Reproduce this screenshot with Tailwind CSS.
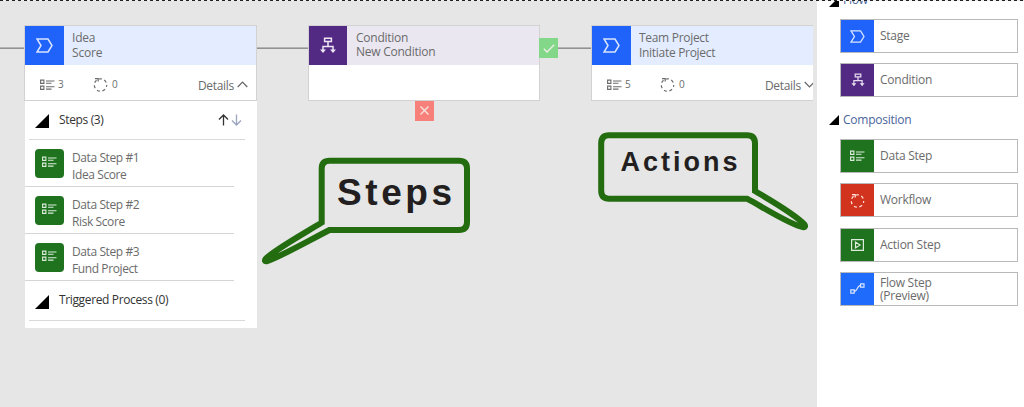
<!DOCTYPE html>
<html lang="en">
<head>
<meta charset="utf-8">
<title>Process designer</title>
<script src="https://cdn.jsdelivr.net/npm/@tailwindcss/browser@4"></script>
</head>
<body class="relative h-[407px] w-[1024px] overflow-hidden bg-white font-['Open_Sans','Noto_Sans',sans-serif] text-[12px] text-[#6b6b6b]">
<svg class="hidden">
  <symbol id="stage" viewBox="0 0 17 15"><path d="M1 1H12L16 7.5 12 14H1L5 7.5Z" fill="none" stroke="currentColor" stroke-width="1.5"/></symbol>
  <symbol id="list" viewBox="0 0 15 12"><path d="M.6 1.1h3.3v3.3H.6zM.6 7.1h3.3v3.3H.6zM6 2h8.5M6 4.3h5.5M6 7.8h8.5M6 10.1h5.5" fill="none" stroke="currentColor" stroke-width="1.1"/></symbol>
  <symbol id="cycle" viewBox="0 0 15 15"><circle cx="7.5" cy="8" r="6.2" fill="none" stroke="currentColor" stroke-width="1.2" stroke-dasharray="3 2.57" stroke-dashoffset="1"/><path d="M2 1.700H5.200V4.500" fill="none" stroke="currentColor" stroke-width="1.2"/></symbol>
  <symbol id="branch" viewBox="0 0 16 17"><path d="M4.6 1.3h6.800v3.300H4.600zM8 4.600v4.800M3 14V9.400h10V14" fill="none" stroke="currentColor" stroke-width="1.5"/><path d="M0 12.400h6L3 16zM10 12.400h6L13 16z" fill="currentColor"/></symbol>
  <symbol id="corner" viewBox="0 0 14 14"><path d="M14 0V14H0Z" fill="#000"/></symbol>
</svg>

<div class="flex h-full">
  <main class="relative h-full w-[817px] shrink-0 overflow-hidden bg-[#e6e6e6]">
    <div class="absolute left-0 top-[47px] h-px w-[813px] bg-[#b4b4b4]"></div>
    <div class="absolute left-0 top-[48px] h-px w-[813px] bg-[#929292]"></div>

    <!-- Idea stage -->
    <section class="absolute left-[24px] top-[25px] w-[233px]">
      <div class="h-[76px] border border-[#d2d2d2] bg-white">
        <div class="flex h-[39px] bg-[#e4edff]">
          <div class="flex w-[39px] items-center justify-center bg-[#1f63fb] text-[#d9e5ff]"><svg class="h-[15px] w-[17px]"><use href="#stage"/></svg></div>
          <div class="pl-[8px] pt-[5px] leading-[14.5px] tracking-[-0.2px]"><div>Idea</div><div>Score</div></div>
        </div>
        <div class="flex h-[35px] items-center pl-[15px] pr-[8px]">
          <svg class="mt-[4px] h-[12px] w-[15px]"><use href="#list"/></svg><span class="ml-[3px] mt-[4px] w-[6px] text-[10px]">3</span>
          <svg class="ml-[29px] mt-[3px] h-[15px] w-[15px]"><use href="#cycle"/></svg><span class="ml-[4px] mt-[4px] text-[10px]">0</span>
          <span class="ml-auto mt-[7px] tracking-[-0.3px]">Details</span>
          <svg class="ml-[3px] mt-[4px] h-[7px] w-[11px]" viewBox="0 0 11 7"><path d="M.7 6 5.5 1l4.8 5" fill="none" stroke="#666" stroke-width="1.2"/></svg>
        </div>
      </div>
      <div class="ml-px h-[227px] bg-white">
        <div class="ml-[4px] flex h-[39px] w-[216px] items-center border-b border-[#d9d9d9] pl-[6px] pr-[3px] text-[#333]">
          <svg class="mt-[1px] size-[14px]"><use href="#corner"/></svg>
          <span class="-mt-px ml-[10px] tracking-[-0.35px]">Steps (3)</span>
          <svg class="ml-auto h-[12px] w-[24px]" viewBox="0 0 24 12"><path d="M5.5 11.5V1M1 5.5 5.5 1 10 5.5" fill="none" stroke="#333" stroke-width="1.3"/><path d="M18.5.5V11M14 6.5 18.5 11 23 6.5" fill="none" stroke="#9ba5bd" stroke-width="1.3"/></svg>
        </div>
        <div class="flex h-[47px] w-[209px] border-b border-[#d5d5d5] pl-[10px] pt-[9px]">
          <div class="flex size-[29px] items-center justify-center rounded-[4px] bg-[#1f731f] pb-[4px] text-[#dcebdc]"><svg class="h-[12px] w-[15px]"><use href="#list"/></svg></div>
          <div class="ml-[8px] leading-[17px] tracking-[-0.4px]"><div>Data Step #1</div><div>Idea Score</div></div>
        </div>
        <div class="flex h-[47px] w-[209px] border-b border-[#d5d5d5] pl-[10px] pt-[9px]">
          <div class="flex size-[29px] items-center justify-center rounded-[4px] bg-[#1f731f] pb-[4px] text-[#dcebdc]"><svg class="h-[12px] w-[15px]"><use href="#list"/></svg></div>
          <div class="ml-[8px] leading-[17px] tracking-[-0.4px]"><div>Data Step #2</div><div>Risk Score</div></div>
        </div>
        <div class="flex h-[47px] w-[209px] border-b border-[#d5d5d5] pl-[10px] pt-[9px]">
          <div class="flex size-[29px] items-center justify-center rounded-[4px] bg-[#1f731f] pb-[4px] text-[#dcebdc]"><svg class="h-[12px] w-[15px]"><use href="#list"/></svg></div>
          <div class="ml-[8px] leading-[17px] tracking-[-0.4px]"><div>Data Step #3</div><div>Fund Project</div></div>
        </div>
        <div class="ml-[4px] flex h-[40px] w-[216px] items-center border-b border-[#d9d9d9] pl-[6px] text-[#333]">
          <svg class="mt-[2px] size-[14px]"><use href="#corner"/></svg><span class="-mt-px ml-[10px] tracking-[-0.36px]">Triggered Process (0)</span>
        </div>
      </div>
    </section>

    <!-- Condition -->
    <section class="absolute left-[308px] top-[25px] h-[76px] w-[232px] border border-[#d2d2d2] bg-white">
      <div class="flex h-[39px] bg-[#eae7f1]">
        <div class="flex w-[38px] items-center justify-center bg-[#532a83] text-[#eee6f6]"><svg class="h-[17px] w-[16px]"><use href="#branch"/></svg></div>
        <div class="pl-[9px] pt-[5px] leading-[14px] tracking-[-0.25px]"><div>Condition</div><div>New Condition</div></div>
      </div>
    </section>
    <div class="absolute left-[539px] top-[38px] flex h-[20px] w-[19px] items-center justify-center bg-[#82d888]"><svg class="h-[9px] w-[12px]" viewBox="0 0 12 9"><path d="M.8 4.8 4 8l7.2-7.2" fill="none" stroke="#f0f0e8" stroke-width="1.3"/></svg></div>
    <div class="absolute left-[415px] top-[101px] flex h-[20px] w-[19px] items-center justify-center bg-[#f8807a]"><svg class="mb-[2px] size-[9px]" viewBox="0 0 9 9"><path d="m.5.5 8 8m0-8-8 8" stroke="#f6e6e0" stroke-width="1.3"/></svg></div>

    <!-- Team Project stage, cut off by the viewport edge -->
    <div class="absolute left-[591px] top-[25px] w-[222px] overflow-hidden">
      <section class="h-[76px] w-[233px] border border-[#d2d2d2] bg-white">
        <div class="flex h-[39px] bg-[#e4edff]">
          <div class="flex w-[39px] items-center justify-center bg-[#1f63fb] text-[#d9e5ff]"><svg class="h-[15px] w-[17px]"><use href="#stage"/></svg></div>
          <div class="pl-[8px] pt-[5px] leading-[14.5px] tracking-[-0.3px]"><div>Team Project</div><div>Initiate Project</div></div>
        </div>
        <div class="flex h-[35px] items-center pl-[15px] pr-[8px]">
          <svg class="mt-[4px] h-[12px] w-[15px]"><use href="#list"/></svg><span class="ml-[3px] mt-[4px] w-[6px] text-[10px]">5</span>
          <svg class="ml-[29px] mt-[3px] h-[15px] w-[15px]"><use href="#cycle"/></svg><span class="ml-[4px] mt-[4px] text-[10px]">0</span>
          <span class="ml-auto mt-[7px] tracking-[-0.3px]">Details</span>
          <svg class="ml-[3px] mt-[4px] h-[7px] w-[11px]" viewBox="0 0 11 7"><path d="M.7 1 5.5 6l4.8-5" fill="none" stroke="#666" stroke-width="1.2"/></svg>
        </div>
      </section>
    </div>

    <!-- Callouts -->
    <svg class="absolute left-0 top-0 h-[407px] w-[817px]" viewBox="0 0 817 407" fill="none" stroke="#246c10" stroke-width="6" font-family="'Liberation Sans',sans-serif" font-weight="bold">
      <path d="M321.7 222.5V168.5Q321.7 160.7 329.5 160.7H459Q467 160.7 467 168.5V222Q467 230 459 230H329.5C308 241 278 258 266.5 261.3Q264 261.5 265.5 259C274 250 304 233.5 321.7 222.5Z"/>
      <path d="M755 191V143.5Q755 135.3 747 135.3H609Q601.2 135.3 601.2 143.5V190.5Q601.2 198.7 609 198.7H747C762 206.5 791 225.5 803.5 227.3Q806 227 804.5 224.5C795 214 770 200 755 191Z"/>
      <g fill="#231f20" stroke="none">
        <text x="337" y="205" font-size="37" textLength="115">Steps</text>
        <text x="620.5" y="170.5" font-size="27" textLength="117">Actions</text>
      </g>
    </svg>
  </main>

  <aside class="w-[207px] pl-[12px] pr-[6px] tracking-[-0.25px]">
    <div class="-mt-[8px] flex h-[16px] items-center"><svg class="mt-[4px] size-[10px]"><use href="#corner"/></svg><span class="ml-[4px] text-[#49659b]">Flow</span></div>
    <div class="ml-[11px] mt-[11px] flex flex-col gap-[10px]">
      <div class="flex h-[34px] items-center border border-[#b9b9b9]"><div class="flex h-full w-[33px] shrink-0 items-center justify-center bg-[#1f63fb] text-[#d9e5ff]"><svg class="h-[13px] w-[15px]"><use href="#stage"/></svg></div><span class="ml-[6px]">Stage</span></div>
      <div class="flex h-[34px] items-center border border-[#b9b9b9]"><div class="flex h-full w-[33px] shrink-0 items-center justify-center bg-[#532a83] text-[#e6dcf0]"><svg class="h-[14px] w-[14px]"><use href="#branch"/></svg></div><span class="ml-[6px]">Condition</span></div>
    </div>
    <div class="mt-[14px] flex h-[18px] items-center"><svg class="size-[10px]"><use href="#corner"/></svg><span class="ml-[4px] text-[#49659b]">Composition</span></div>
    <div class="ml-[11px] mt-[10px] flex flex-col gap-[10.3px]">
      <div class="flex h-[34px] items-center border border-[#b9b9b9]"><div class="flex h-full w-[33px] shrink-0 items-center justify-center bg-[#1f731f] text-[#dcebdc]"><svg class="h-[12px] w-[15px]"><use href="#list"/></svg></div><span class="ml-[6px]">Data Step</span></div>
      <div class="flex h-[34px] items-center border border-[#b9b9b9]"><div class="flex h-full w-[33px] shrink-0 items-center justify-center bg-[#d2331f] text-[#ffe6e0]"><svg class="size-[15px]"><use href="#cycle"/></svg></div><span class="ml-[6px]">Workflow</span></div>
      <div class="flex h-[34px] items-center border border-[#b9b9b9]"><div class="flex h-full w-[33px] shrink-0 items-center justify-center bg-[#1f731f] text-[#dcebdc]"><svg class="h-[12px] w-[13px]" viewBox="0 0 13 12"><path d="M.6.6h11.8v10.8H.6zM4.5 3.200v5.600L9 6z" fill="none" stroke="currentColor" stroke-width="1.2"/></svg></div><span class="ml-[6px]">Action Step</span></div>
      <div class="flex h-[34px] items-center border border-[#b9b9b9]"><div class="flex h-full w-[33px] shrink-0 items-center justify-center bg-[#1f6bfb] text-[#d9e5ff]"><svg class="h-[11px] w-[15px]" viewBox="0 0 15 11"><path d="M.8 6.800h3.400v3.400H.8zM10.600.8H14v3.400h-3.400zM4.200 8.600c3.500 0 2.700-6.200 6.400-6.200" fill="none" stroke="currentColor" stroke-width="1.2"/></svg></div><span class="ml-[6px] leading-[13px]">Flow Step<br>(Preview)</span></div>
    </div>
  </aside>
</div>
<div class="absolute left-0 top-0 h-px w-full bg-[repeating-linear-gradient(90deg,#222_0_3px,#eee_3px_6px)]"></div>
</body>
</html>
